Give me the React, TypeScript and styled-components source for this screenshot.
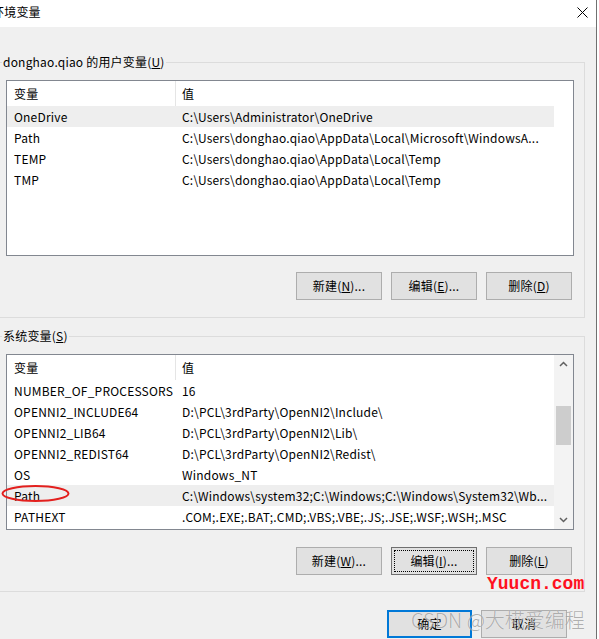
import React from 'react';
import styled, { createGlobalStyle } from 'styled-components';

const GlobalStyle = createGlobalStyle`
  html, body { margin: 0; padding: 0; background: #ffffff; }
  body {
    width: 599px;
    height: 639px;
    overflow: hidden;
    font-family: "Noto Sans CJK SC", "Noto Sans", sans-serif;
    font-size: 12px;
    letter-spacing: 0.2px;
    color: #000;
  }
  * { box-sizing: border-box; }
`;

const Screen = styled.div`
  position: relative;
  width: 599px;
  height: 639px;
  overflow: hidden;
  display: flex;
  background: #ffffff;
`;

const Window = styled.div`
  width: 597px;
  height: 639px;
  border-right: 1px solid #707070;
  display: flex;
  flex-direction: column;
  overflow: hidden;
`;

const TitleBar = styled.div`
  height: 27px;
  flex: none;
  background: #ffffff;
  display: flex;
  justify-content: space-between;
  align-items: flex-start;
`;

const TitleText = styled.div`
  margin-left: -8px;
  margin-top: 4px;
  line-height: 16px;
  white-space: nowrap;
`;

const CloseIcon = styled.svg`
  margin-top: 7px;
  margin-right: 8px;
  flex: none;
`;

const Body = styled.div`
  flex: 1;
  background: #f0f0f0;
  padding-top: 27px;
  display: flex;
  flex-direction: column;
`;

const Group = styled.fieldset<{ $top: number }>`
  margin: ${(p) => p.$top}px 11px 0 -6px;
  padding: 0;
  border: 1px solid #dcdcdc;
  min-width: 0;
`;

const GroupLabel = styled.legend`
  margin-left: 7px;
  padding: 0 1px;
  line-height: 16px;
  font-size: 12px;
`;

const GroupContent = styled.div<{ $tail: number }>`
  padding: 0 0 ${(p) => p.$tail}px 11px;
`;

const ListView = styled.div`
  margin-top: 10px;
  width: 568px;
  height: 176px;
  border: 1px solid #828790;
  background: #ffffff;
  display: flex;
  overflow: hidden;
`;

const Columns = styled.div`
  width: 547px;
  flex: none;
  display: flex;
  flex-direction: column;
`;

const HeaderRow = styled.div`
  display: grid;
  grid-template-columns: 169px 1fr;
  height: 25px;
  line-height: 25px;
`;

const HeaderCell = styled.div<{ $first?: boolean }>`
  padding-left: ${(p) => (p.$first ? 7 : 6)}px;
  border-right: ${(p) => (p.$first ? '1px solid #e5e5e5' : 'none')};
`;

const Row = styled.div<{ $selected?: boolean }>`
  display: grid;
  grid-template-columns: 169px 1fr;
  height: 21px;
  line-height: 21px;
  background: ${(p) => (p.$selected ? '#eeeeee' : 'transparent')};
`;

const Cell = styled.div<{ $first?: boolean }>`
  padding-left: ${(p) => (p.$first ? 7 : 6)}px;
  white-space: nowrap;
  overflow: hidden;
`;

const ScrollBar = styled.div`
  flex: 1;
  background: #f3f3f3;
  display: flex;
  flex-direction: column;
  align-items: center;
`;

const ArrowButton = styled.div`
  height: 18px;
  width: 100%;
  display: flex;
  align-items: center;
  justify-content: center;
  flex: none;
`;

const Track = styled.div`
  flex: 1;
  width: 100%;
  display: flex;
  justify-content: center;
`;

const Thumb = styled.div`
  margin-top: 33px;
  width: 15px;
  height: 39px;
  background: #cdcdcd;
`;

const ButtonRow = styled.div<{ $gap: number }>`
  margin-top: ${(p) => p.$gap}px;
  width: 568px;
  padding-right: 2px;
  display: flex;
  justify-content: flex-end;
  gap: 9px;
`;

const Button = styled.button<{ $focused?: boolean; $default?: boolean; $w?: number }>`
  width: ${(p) => p.$w ?? 86}px;
  height: 28px;
  padding: 0;
  background: #e1e1e1;
  border: ${(p) => (p.$default ? '2px solid #0078d7' : p.$focused ? '1px solid #6f6f6f' : '1px solid #adadad')};
  outline: ${(p) => (p.$focused ? '1px dotted #000' : 'none')};
  outline-offset: -4px;
  font-family: "Noto Sans CJK SC", "Noto Sans", sans-serif;
  font-size: 12px;
  letter-spacing: 0.2px;
  color: #000;
  line-height: 16px;
  cursor: default;
`;

const DialogButtons = styled.div`
  margin-top: 18px;
  padding-right: 29px;
  display: flex;
  justify-content: flex-end;
  gap: 9px;
`;

const SiteMark = styled.div`
  position: absolute;
  left: 487px;
  top: 575px;
  font-family: "Liberation Mono", monospace;
  font-weight: bold;
  font-size: 18px;
  line-height: 18px;
  letter-spacing: 0;
  color: #ff1020;
  white-space: nowrap;
`;

const AuthorMark = styled.div`
  position: absolute;
  left: 411px;
  top: 608px;
  font-family: "Noto Sans CJK SC", sans-serif;
  font-weight: 300;
  font-size: 20px;
  line-height: 24px;
  letter-spacing: 0;
  color: rgba(110, 110, 110, 0.55);
  text-shadow: 0 0 1px rgba(255, 255, 255, 0.8);
  white-space: nowrap;
`;

const Ellipse = styled.svg`
  position: absolute;
  left: 1px;
  top: 484px;
`;

type Item = { name: string; value: string; selected?: boolean };

const userVars: Item[] = [
  { name: 'OneDrive', value: 'C:\\Users\\Administrator\\OneDrive', selected: true },
  { name: 'Path', value: 'C:\\Users\\donghao.qiao\\AppData\\Local\\Microsoft\\WindowsA...' },
  { name: 'TEMP', value: 'C:\\Users\\donghao.qiao\\AppData\\Local\\Temp' },
  { name: 'TMP', value: 'C:\\Users\\donghao.qiao\\AppData\\Local\\Temp' },
];

const sysVars: Item[] = [
  { name: 'NUMBER_OF_PROCESSORS', value: '16' },
  { name: 'OPENNI2_INCLUDE64', value: 'D:\\PCL\\3rdParty\\OpenNI2\\Include\\' },
  { name: 'OPENNI2_LIB64', value: 'D:\\PCL\\3rdParty\\OpenNI2\\Lib\\' },
  { name: 'OPENNI2_REDIST64', value: 'D:\\PCL\\3rdParty\\OpenNI2\\Redist\\' },
  { name: 'OS', value: 'Windows_NT' },
  { name: 'Path', value: 'C:\\Windows\\system32;C:\\Windows;C:\\Windows\\System32\\Wb...', selected: true },
  { name: 'PATHEXT', value: '.COM;.EXE;.BAT;.CMD;.VBS;.VBE;.JS;.JSE;.WSF;.WSH;.MSC' },
];

const Chevron: React.FC<{ up?: boolean }> = ({ up }) => (
  <svg width="9" height="6" viewBox="0 0 9 6">
    <path
      d={up ? 'M1 5 L4.5 1.5 L8 5' : 'M1 1 L4.5 4.5 L8 1'}
      fill="none"
      stroke="#606060"
      strokeWidth="1.5"
    />
  </svg>
);

const VarList: React.FC<{ items: Item[]; scroll?: boolean }> = ({ items, scroll }) => (
  <ListView>
    <Columns>
      <HeaderRow>
        <HeaderCell $first>变量</HeaderCell>
        <HeaderCell>值</HeaderCell>
      </HeaderRow>
      {items.map((it) => (
        <Row key={it.name} $selected={it.selected}>
          <Cell $first>{it.name}</Cell>
          <Cell>{it.value}</Cell>
        </Row>
      ))}
    </Columns>
    {scroll ? (
      <ScrollBar>
        <ArrowButton>
          <Chevron up />
        </ArrowButton>
        <Track>
          <Thumb />
        </Track>
        <ArrowButton>
          <Chevron />
        </ArrowButton>
      </ScrollBar>
    ) : null}
  </ListView>
);

export default function App() {
  return (
    <>
      <GlobalStyle />
      <Screen>
        <Window>
          <TitleBar>
            <TitleText>环境变量</TitleText>
            <CloseIcon width="11" height="11" viewBox="0 0 11 11">
              <path d="M0.5 0.5 L10.5 10.5 M10.5 0.5 L0.5 10.5" stroke="#000" strokeWidth="1" fill="none" />
            </CloseIcon>
          </TitleBar>
          <Body>
            <Group $top={0}>
              <GroupLabel>
                donghao.qiao 的用户变量(<u>U</u>)
              </GroupLabel>
              <GroupContent $tail={17}>
                <VarList items={userVars} />
                <ButtonRow $gap={16}>
                  <Button>
                    新建(<u>N</u>)...
                  </Button>
                  <Button>
                    编辑(<u>E</u>)...
                  </Button>
                  <Button>
                    删除(<u>D</u>)
                  </Button>
                </ButtonRow>
              </GroupContent>
            </Group>
            <Group $top={10}>
              <GroupLabel>
                系统变量(<u>S</u>)
              </GroupLabel>
              <GroupContent $tail={16}>
                <VarList items={sysVars} scroll />
                <ButtonRow $gap={17}>
                  <Button>
                    新建(<u>W</u>)...
                  </Button>
                  <Button $focused>
                    编辑(<u>I</u>)...
                  </Button>
                  <Button>
                    删除(<u>L</u>)
                  </Button>
                </ButtonRow>
              </GroupContent>
            </Group>
            <DialogButtons>
              <Button $default $w={85}>
                确定
              </Button>
              <Button>取消</Button>
            </DialogButtons>
          </Body>
        </Window>
        <Ellipse width="71" height="19" viewBox="0 0 71 19">
          <ellipse cx="34.5" cy="9.5" rx="33" ry="7.5" fill="none" stroke="#e3201e" strokeWidth="2" />
        </Ellipse>
        <SiteMark>Yuucn.com</SiteMark>
        <AuthorMark>CSDN @大椛爱编程</AuthorMark>
      </Screen>
    </>
  );
}
